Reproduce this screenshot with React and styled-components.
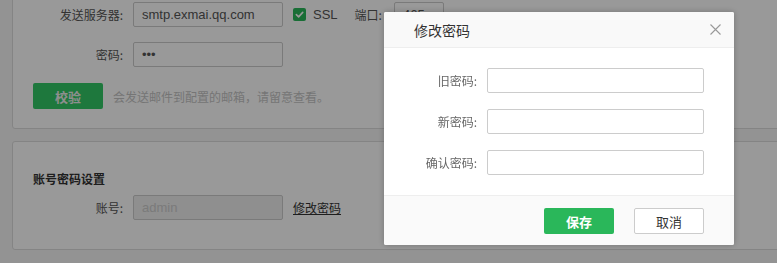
import React, { useState } from 'react';
import styled, { createGlobalStyle } from 'styled-components';

const GlobalStyle = createGlobalStyle`
	html, body {
		margin: 0;
		padding: 0;
		background: #f5f5f5;
		overflow: hidden;
		font-family: "Noto Sans CJK SC", "Liberation Sans", sans-serif;
		font-size: 12px;
		color: #555;
	}
`

const CheckIcon = () => (
	<svg width="9" height="9" viewBox="0 0 10 10">
		<path d="M1.5 5.2 L4 7.6 L8.6 2.6" fill="none" stroke="#fff" strokeWidth="1.8" strokeLinecap="round" strokeLinejoin="round" />
	</svg>
);

const CloseIcon = () => (
	<svg width="11" height="11" viewBox="0 0 11 11">
		<path d="M0.5 0.5 L10.5 10.5 M10.5 0.5 L0.5 10.5" stroke="#999" strokeWidth="1.1" />
	</svg>
);

const App = () => {
	const [oldPwd, setOldPwd] = useState("");
	const [newPwd, setNewPwd] = useState("");
	const [confirmPwd, setConfirmPwd] = useState("");

	return (
		<>
			<GlobalStyle />
			<Page>
				<MailCard>
					<Row>
						<Label>发送服务器:</Label>
						<Input defaultValue="smtp.exmai.qq.com" />
						<CheckBox><CheckIcon /></CheckBox>
						<Ssl>SSL</Ssl>
						<PortLabel>端口:</PortLabel>
						<Input defaultValue="465" width={50} />
					</Row>
					<Row>
						<Label>密码:</Label>
						<Input type="password" defaultValue="abc" />
					</Row>
					<ButtonRow>
						<CheckButton>校验</CheckButton>
						<Hint>会发送邮件到配置的邮箱，请留意查看。</Hint>
					</ButtonRow>
				</MailCard>

				<AccountCard>
					<CardTitle>账号密码设置</CardTitle>
					<Row>
						<Label>账号:</Label>
						<Input defaultValue="admin" disabled />
						<EditLink>修改密码</EditLink>
					</Row>
				</AccountCard>
			</Page>

			<Overlay />

			<Modal>
				<ModalHeader>
					<ModalTitle>修改密码</ModalTitle>
					<CloseButton><CloseIcon /></CloseButton>
				</ModalHeader>
				<ModalBody>
					<FormRow>
						<FormLabel>旧密码:</FormLabel>
						<FormInput type="password" value={oldPwd} onChange={e => setOldPwd(e.target.value)} />
					</FormRow>
					<FormRow>
						<FormLabel>新密码:</FormLabel>
						<FormInput type="password" value={newPwd} onChange={e => setNewPwd(e.target.value)} />
					</FormRow>
					<FormRow>
						<FormLabel>确认密码:</FormLabel>
						<FormInput type="password" value={confirmPwd} onChange={e => setConfirmPwd(e.target.value)} />
					</FormRow>
				</ModalBody>
				<ModalFooter>
					<SaveButton>保存</SaveButton>
					<CancelButton>取消</CancelButton>
				</ModalFooter>
			</Modal>
		</>
	);
}

export default App;


const Page = styled.div`
	padding: 0 0 0 12px;
	display: flex;
	flex-direction: column;
	gap: 12px;
`

const Card = styled.div`
	background: #fff;
	border: 1px solid #ddd;
	border-radius: 3px;
	margin-right: -20px;
	display: flex;
	flex-direction: column;
`

const MailCard = styled(Card)`
	margin-top: -9px;
	padding: 10px 20px 19px;
	gap: 15px;
`

const AccountCard = styled(Card)`
	padding: 27px 20px 29px;
`

const Row = styled.div`
	display: flex;
	align-items: center;
	height: 25px;
`

const ButtonRow = styled(Row)`
	height: 26px;
	margin-top: 1px;
`

const Label = styled.label`
	width: 90px;
	text-align: right;
	color: #555;
	font-size: 12px;
	margin-right: 10px;
	flex-shrink: 0;
`

const Input = styled.input`
	width: ${props => props.width || 150}px;
	height: 25px;
	box-sizing: border-box;
	border: 1px solid #ccc;
	border-radius: 2px;
	padding: 0 8px;
	font-family: "Liberation Sans", sans-serif;
	font-size: 13px;
	color: #555;
	background: #fff;
	outline: none;
	flex-shrink: 0;

	&:disabled {
		background: #eee;
		color: #ccc;
	}
`

const CheckBox = styled.span`
	width: 13px;
	height: 13px;
	margin-left: 10px;
	border-radius: 2px;
	background: #2ab75a;
	display: flex;
	align-items: center;
	justify-content: center;
`

const Ssl = styled.span`
	margin-left: 7px;
	font-family: "Liberation Sans", sans-serif;
	font-size: 13px;
	color: #555;
`

const PortLabel = styled.span`
	margin-left: 17px;
	margin-right: 12px;
	color: #555;
`

const CheckButton = styled.button`
	width: 70px;
	height: 26px;
	border: none;
	border-radius: 2px;
	background: #33c866;
	color: #eee;
	font-family: inherit;
	font-size: 13px;
	font-weight: bold;
`

const Hint = styled.span`
	margin-left: 10px;
	color: #c4c4c4;
	font-size: 12px;
`

const CardTitle = styled.div`
	font-weight: bold;
	color: #333;
	font-size: 12px;
	line-height: 20px;
	margin-bottom: 6px;
`

const EditLink = styled.a`
	margin-left: 10px;
	color: #333;
	text-decoration: underline;
	font-size: 12px;
	cursor: pointer;
`

const Overlay = styled.div`
	position: fixed;
	inset: 0;
	background: rgba(0, 0, 0, 0.4);
`

const Modal = styled.div`
	position: fixed;
	top: 12px;
	left: 384px;
	width: 350px;
	background: #fff;
	border-radius: 2px;
	box-shadow: 0 0 6px rgba(0, 0, 0, 0.25);
	overflow: hidden;
	display: flex;
	flex-direction: column;
`

const ModalHeader = styled.div`
	height: 35px;
	background: #f9f9f9;
	border-bottom: 1px solid #eee;
	display: flex;
	align-items: center;
	justify-content: space-between;
	padding: 0 13px 0 30px;
`

const ModalTitle = styled.div`
	font-size: 14px;
	color: #333;
`

const CloseButton = styled.span`
	display: flex;
	cursor: pointer;
`

const ModalBody = styled.div`
	padding: 20px 30px 20px 10px;
	display: flex;
	flex-direction: column;
	gap: 16px;
`

const FormRow = styled.div`
	display: flex;
	align-items: center;
`

const FormLabel = styled.label`
	width: 83px;
	text-align: right;
	margin-right: 10px;
	color: #666;
	font-size: 12px;
`

const FormInput = styled.input`
	width: 217px;
	height: 25px;
	box-sizing: border-box;
	border: 1px solid #ccc;
	border-radius: 2px;
	outline: none;
`

const ModalFooter = styled.div`
	border-top: 1px solid #eee;
	background: #fafafa;
	padding: 12px 30px 11px;
	display: flex;
	justify-content: flex-end;
	gap: 20px;
`

const FooterButton = styled.button`
	width: 70px;
	height: 26px;
	box-sizing: border-box;
	border-radius: 2px;
	font-family: inherit;
	font-size: 13px;
	cursor: pointer;
`

const SaveButton = styled(FooterButton)`
	border: none;
	background: #2ab75a;
	color: #fff;
	font-weight: bold;
`

const CancelButton = styled(FooterButton)`
	border: 1px solid #ccc;
	background: #fff;
	color: #333;
`
